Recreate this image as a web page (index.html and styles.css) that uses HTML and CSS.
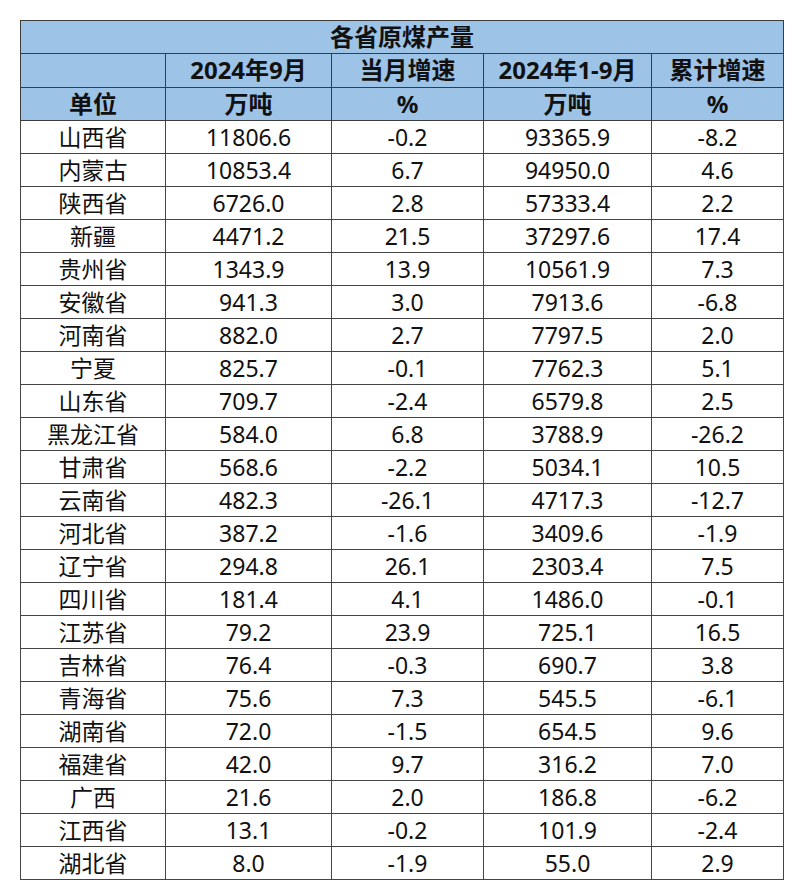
FILE: index.html
```html
<!DOCTYPE html>
<html lang="zh-CN">
<head>
<meta charset="utf-8">
<title>各省原煤产量</title>
<link rel="stylesheet" href="styles.css">
</head>
<body>
<table class="coal">
  <colgroup>
    <col class="c1"><col class="c2"><col class="c3"><col class="c4"><col class="c5">
  </colgroup>
  <thead>
    <tr><th colspan="5" class="title">各省原煤产量</th></tr>
    <tr><th></th><th>2024年9月</th><th>当月增速</th><th>2024年1-9月</th><th>累计增速</th></tr>
    <tr><th>单位</th><th>万吨</th><th>%</th><th>万吨</th><th>%</th></tr>
  </thead>
  <tbody>
    <tr><td>山西省</td><td>11806.6</td><td>-0.2</td><td>93365.9</td><td>-8.2</td></tr>
    <tr><td>内蒙古</td><td>10853.4</td><td>6.7</td><td>94950.0</td><td>4.6</td></tr>
    <tr><td>陕西省</td><td>6726.0</td><td>2.8</td><td>57333.4</td><td>2.2</td></tr>
    <tr><td>新疆</td><td>4471.2</td><td>21.5</td><td>37297.6</td><td>17.4</td></tr>
    <tr><td>贵州省</td><td>1343.9</td><td>13.9</td><td>10561.9</td><td>7.3</td></tr>
    <tr><td>安徽省</td><td>941.3</td><td>3.0</td><td>7913.6</td><td>-6.8</td></tr>
    <tr><td>河南省</td><td>882.0</td><td>2.7</td><td>7797.5</td><td>2.0</td></tr>
    <tr><td>宁夏</td><td>825.7</td><td>-0.1</td><td>7762.3</td><td>5.1</td></tr>
    <tr><td>山东省</td><td>709.7</td><td>-2.4</td><td>6579.8</td><td>2.5</td></tr>
    <tr><td>黑龙江省</td><td>584.0</td><td>6.8</td><td>3788.9</td><td>-26.2</td></tr>
    <tr><td>甘肃省</td><td>568.6</td><td>-2.2</td><td>5034.1</td><td>10.5</td></tr>
    <tr><td>云南省</td><td>482.3</td><td>-26.1</td><td>4717.3</td><td>-12.7</td></tr>
    <tr><td>河北省</td><td>387.2</td><td>-1.6</td><td>3409.6</td><td>-1.9</td></tr>
    <tr><td>辽宁省</td><td>294.8</td><td>26.1</td><td>2303.4</td><td>7.5</td></tr>
    <tr><td>四川省</td><td>181.4</td><td>4.1</td><td>1486.0</td><td>-0.1</td></tr>
    <tr><td>江苏省</td><td>79.2</td><td>23.9</td><td>725.1</td><td>16.5</td></tr>
    <tr><td>吉林省</td><td>76.4</td><td>-0.3</td><td>690.7</td><td>3.8</td></tr>
    <tr><td>青海省</td><td>75.6</td><td>7.3</td><td>545.5</td><td>-6.1</td></tr>
    <tr><td>湖南省</td><td>72.0</td><td>-1.5</td><td>654.5</td><td>9.6</td></tr>
    <tr><td>福建省</td><td>42.0</td><td>9.7</td><td>316.2</td><td>7.0</td></tr>
    <tr><td>广西</td><td>21.6</td><td>2.0</td><td>186.8</td><td>-6.2</td></tr>
    <tr><td>江西省</td><td>13.1</td><td>-0.2</td><td>101.9</td><td>-2.4</td></tr>
    <tr><td>湖北省</td><td>8.0</td><td>-1.9</td><td>55.0</td><td>2.9</td></tr>
  </tbody>
</table>
</body>
</html>
```
FILE: styles.css
```css
html, body {
  margin: 0;
  padding: 0;
  background: #ffffff;
}
body {
  padding: 20px 0 0 20px;
}
.coal {
  border-collapse: collapse;
  table-layout: fixed;
  width: 763px;
  font-family: "Noto Sans", "Noto Sans CJK SC", sans-serif;
  font-size: 23px;
  color: #111;
  border: 1.5px solid #222;
}
.c1 { width: 145px; }
.c2 { width: 166px; }
.c3 { width: 152px; }
.c4 { width: 168px; }
.c5 { width: 132px; }
.coal th, .coal td {
  border: 1px solid #444;
  height: 32px;
  padding: 0;
  text-align: center;
  vertical-align: middle;
  line-height: 32px;
  white-space: nowrap;
}
.coal thead th {
  background: #9dc3e6;
  font-weight: 700;
  font-size: 24px;
  color: #111;
  height: 32.3px;
  border-color: #3c3c3c;
}
.coal tbody td {
  font-weight: 400;
}
```
